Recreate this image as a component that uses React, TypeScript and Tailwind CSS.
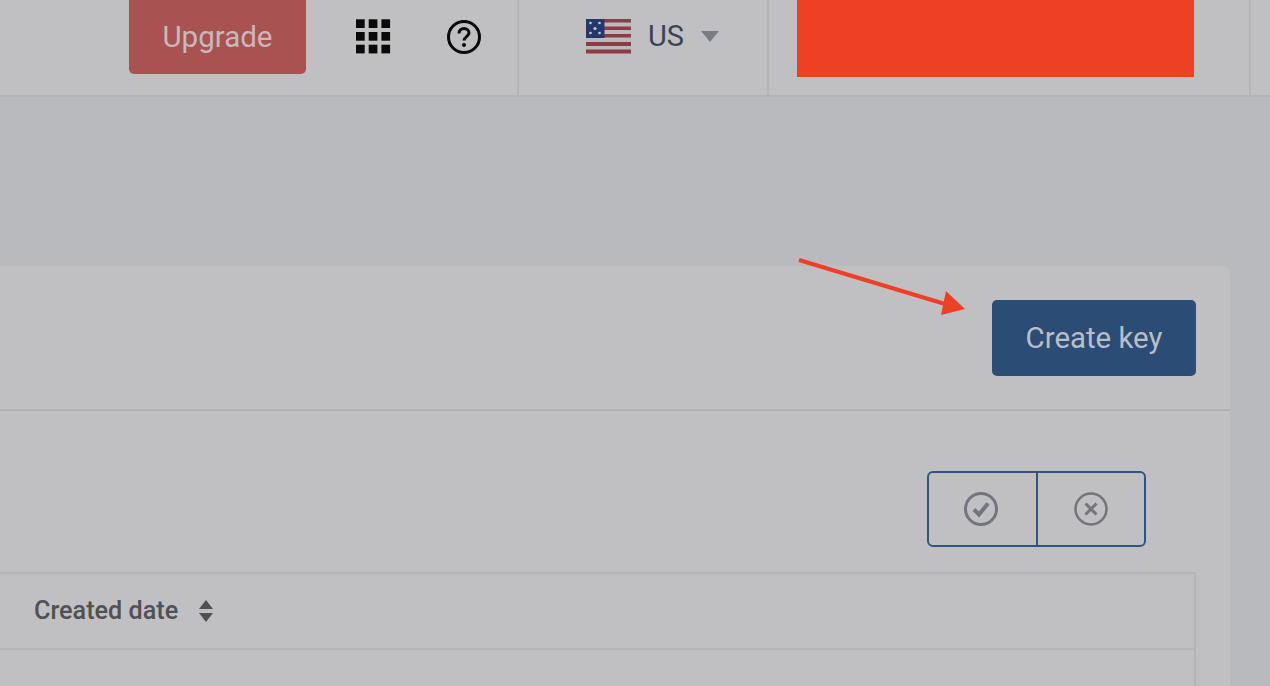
export default function App() {
  return (
    <div className="relative w-[1270px] h-[686px] overflow-hidden bg-[#b9babe] font-['Roboto',sans-serif]">
      <header className="h-[97px] bg-[#c0c0c2] border-b-2 border-[#b4b5b8] flex">
        <div className="w-[519px] shrink-0 flex items-start border-r-2 border-[#b4b5b8]">
          <button className="ml-[129px] w-[177px] h-[74px] rounded-b-[5px] bg-[#a85252] text-[#c8b8b8] text-[29.5px] leading-[72px]">Upgrade</button>
          <svg className="ml-[49px] mt-[19px]" width="36" height="36" viewBox="0 0 36 36" fill="#0a0a0a">
            {[0, 12.7, 25.4].flatMap((y) => [0, 12.7, 25.4].map((x) => <rect key={`${x}-${y}`} x={x + 1} y={y + 0.3} width="8.7" height="8.7" />))}
          </svg>
          <svg className="ml-[55px] mt-[19px]" width="36" height="36" viewBox="0 0 36 36" fill="none" stroke="#0a0a0a">
            <circle cx="18" cy="18" r="15.5" strokeWidth="3" />
            <path d="M13 14.500c0-3 2.200-5 5-5s5 2 5 4.500c0 3.500-5 3.700-5 7.500" strokeWidth="3" />
            <circle cx="18" cy="26" r="2" fill="#0a0a0a" stroke="none" />
          </svg>
        </div>
        <div className="w-[250px] shrink-0 flex items-start border-r-2 border-[#b4b5b8]">
          <svg className="ml-[67px] mt-[19px]" width="46" height="35" viewBox="0 0 46 35">
            <rect width="45" height="34.500" rx="1.500" fill="#b9babc" />
            <rect x="0" y="0" width="45" height="3.500" fill="#8f3a45" />
            <rect x="0" y="7.500" width="45" height="3.500" fill="#8f3a45" />
            <rect x="0" y="15" width="45" height="3.500" fill="#8f3a45" />
            <rect x="0" y="23" width="45" height="4" fill="#8f3a45" />
            <rect x="0" y="30.500" width="45" height="4" fill="#8f3a45" />
            <rect width="18.500" height="19" fill="#24386b" />
            <g fill="#c8c8cc">
              <circle cx="4.500" cy="4" r="1.300" /><circle cx="13.500" cy="4" r="1.300" /><circle cx="9" cy="9.500" r="1.600" /><circle cx="4.500" cy="14" r="1.300" /><circle cx="13.500" cy="14" r="1.300" />
            </g>
          </svg>
          <span className="ml-[16px] mt-[18px] text-[#3d4451] text-[29px] leading-[36px]">US</span>
          <svg className="ml-[17px] mt-[31px]" width="18" height="11" viewBox="0 0 18 11"><path d="M0 0h18L9 11z" fill="#7a7d84" /></svg>
        </div>
        <div className="ml-[28px] w-[397px] h-[77px] bg-[#ee4024]" />
        <div className="ml-[55px] w-[2px] bg-[#b4b5b8]" />
      </header>

      <main className="ml-[-40px] mt-[169px] w-[1270px] h-[500px] rounded-t-[8px] bg-[#c0c0c2]">
        <div className="h-[145px] border-b-2 border-[#b0b1b4] flex justify-end items-start pr-[34px]">
          <button className="mt-[34px] w-[204px] h-[76px] rounded-[5px] bg-[#2b4c74] text-[#b9bfc8] text-[29.400px]">Create key</button>
        </div>
        <div className="flex justify-end pr-[84px] pt-[60px]">
          <div className="flex w-[219px] h-[76px] rounded-[6px] border-2 border-[#31547f]">
            <div className="flex-1 flex items-center justify-center border-r-2 border-[#31547f] pr-[4px]">
              <svg width="36" height="36" viewBox="0 0 36 36" fill="none" stroke="#72757b">
                <circle cx="18" cy="18" r="15.500" strokeWidth="3" />
                <path d="M11 18.500l5 5 9-11" strokeWidth="4" />
              </svg>
            </div>
            <div className="w-[106px] flex items-center justify-center">
              <svg width="36" height="36" viewBox="0 0 36 36" fill="none" stroke="#72757b">
                <circle cx="18" cy="18" r="15.500" strokeWidth="2.500" />
                <path d="M12.500 12.500l11 11M23.500 12.500l-11 11" strokeWidth="3" />
              </svg>
            </div>
          </div>
        </div>
        <div className="ml-[30px] mr-[34px] mt-[25px] border-2 border-b-0 border-[#b4b5b8]">
          <div className="h-[76px] border-b-2 border-[#b4b5b8] flex items-center pl-[42px]">
            <span className="text-[#505155] text-[25.200px] font-medium">Created date</span>
            <svg className="ml-[20px]" width="16" height="24" viewBox="0 0 16 24" fill="#505155"><path d="M8 1l7 9H1zM1 14h14l-7 9z" /></svg>
          </div>
          <div className="h-[60px]" />
        </div>
      </main>

      <svg className="absolute left-[795px] top-[255px]" width="175" height="65" viewBox="0 0 175 65">
        <path d="M4 5L150 49" stroke="#ee4024" strokeWidth="4" />
        <path d="M170 54L146 60L151 36z" fill="#ee4024" />
      </svg>
    </div>
  );
}
